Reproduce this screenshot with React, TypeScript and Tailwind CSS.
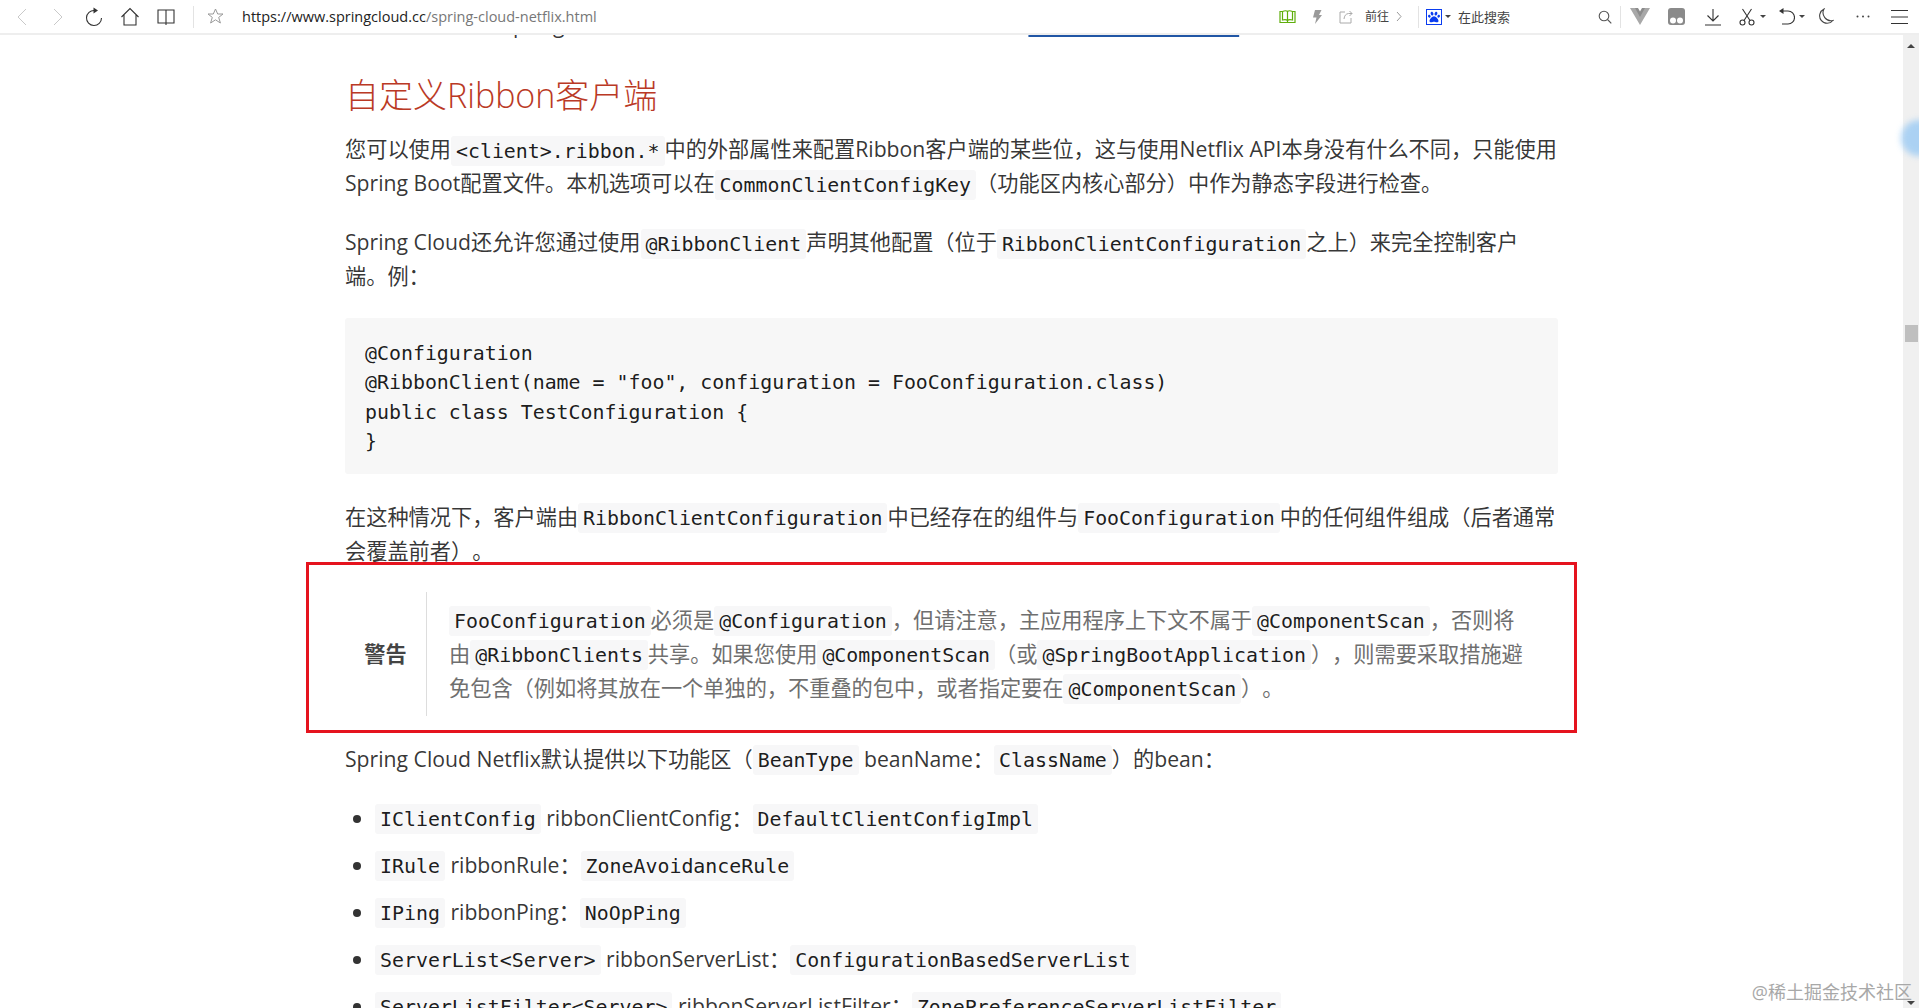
import { FaPaw } from 'react-icons/fa'
import type { ReactNode } from 'react'

const bodyFont = "font-['Open_Sans','Noto_Sans_CJK_SC',sans-serif]"

function Code({ children }: { children: ReactNode }) {
  return (
    <code className="rounded-[3px] bg-[#f7f7f8] px-[5px] py-[3.5px] font-['DejaVu_Sans_Mono','Noto_Sans_CJK_SC',monospace] text-[19.9px] leading-none text-[rgba(0,0,0,0.9)]">
      {children}
    </code>
  )
}

function Caret() {
  return <span className="h-0 w-0 border-x-[3px] border-t-[3px] border-x-transparent border-t-[#444]" />
}

function Slot({ w, children }: { w: string; children: ReactNode }) {
  return <span className={`flex shrink-0 items-center justify-center ${w}`}>{children}</span>
}

function Toolbar() {
  return (
    <header className="relative z-10 flex h-[35px] shrink-0 items-center border-b-2 border-[#eeeeee] bg-white pl-[4px]">
      <Slot w="w-9">
        <svg width="12" height="18" viewBox="0 0 12 18" fill="none" stroke="#c9c9c9" strokeWidth="1">
          <path d="M10 1 2 9l8 8" />
        </svg>
      </Slot>
      <Slot w="w-9">
        <svg width="12" height="18" viewBox="0 0 12 18" fill="none" stroke="#c9c9c9" strokeWidth="1">
          <path d="m2 1 8 8-8 8" />
        </svg>
      </Slot>
      <Slot w="w-9">
        <svg width="18" height="20" viewBox="0 0 18 20" fill="none" stroke="#333" strokeWidth="1.1">
          <path d="M9.500 3.500A7.500 7.500 0 1 0 16.500 11" />
          <path d="M8.500.5v6L13 3.500z" fill="#333" stroke="none" />
        </svg>
      </Slot>
      <Slot w="w-9">
        <svg width="20" height="20" viewBox="0 0 20 20" fill="none" stroke="#333" strokeWidth="1.1">
          <path d="M1.5 10 10 1.5 18.5 10M4 8v10h12V8" />
        </svg>
      </Slot>
      <Slot w="w-9">
        <svg width="18" height="18" viewBox="0 0 18 18" fill="none" stroke="#333" strokeWidth="1.1">
          <path d="M1 2h16v13H1zM9 2v15" />
        </svg>
      </Slot>
      <span className="ml-[9px] h-[22px] w-px bg-[#e3e3e3]" />
      <Slot w="ml-[11px] w-[20px]">
        <svg width="17" height="17" viewBox="0 0 17 17" fill="none" stroke="#999" strokeWidth="1">
          <path d="m8.5 1 2.2 5h5.3l-4.3 3.4 1.7 5.6-4.9-3.2L3.6 15l1.7-5.6L1 6h5.3z" />
        </svg>
      </Slot>
      <span className={`ml-[17px] pt-px ${bodyFont} text-[14.5px]`}>
        <span className="text-[#222]">https://www.springcloud.cc</span>
        <span className="text-[#777]">/spring-cloud-netflix.html</span>
      </span>

      <div className="absolute left-[1272px] top-0 flex h-[33px] items-center">
        <Slot w="w-[30px]">
          <svg width="17" height="15" viewBox="0 0 17 15" fill="none" stroke="#5fae0a" strokeWidth="1.2">
            <path d="M1 2.5h2.5q3.5-1.5 5 0 1.5-1.5 5 0H16v11H1zM3.5 2.5v8.5q3.500-1 5 .5 1.500-1.500 5-.5V2.500M8.500 2.500v11" />
          </svg>
        </Slot>
        <Slot w="w-[30px]">
          <svg width="10" height="14" viewBox="0 0 10 14" fill="#9a9a9a">
            <path d="M3 0h6.500L7 5h3l-7 9 1.500-6.500H1z" />
          </svg>
        </Slot>
        <Slot w="w-[28px]">
          <svg width="14" height="14" viewBox="0 0 14 14" fill="none" stroke="#aaa" strokeWidth="1">
            <path d="M6 2H1v11h11V8M5 9q.5-5 4.500-5.500H13M10.500 1 13 3.500 10.500 6" />
          </svg>
        </Slot>
        <span className={`ml-[5px] ${bodyFont} text-[12px] text-[#444]`}>前往</span>
        <Slot w="ml-[4px] w-[12px]">
          <svg width="6" height="11" viewBox="0 0 6 11" fill="none" stroke="#999" strokeWidth="1">
            <path d="m1 1 4 4.500L1 10" />
          </svg>
        </Slot>
        <span className="ml-[13px] h-[22px] w-px bg-[#e3e3e3]" />
        <span className="ml-[7px] flex h-[16px] w-[16px] items-center justify-center border border-[#0a3cf0] bg-white">
          <FaPaw className="text-[12px] text-[#0a3cf0]" />
        </span>
        <Slot w="ml-[1px] w-[10px]">
          <Caret />
        </Slot>
        <span className={`ml-[5px] ${bodyFont} text-[13px] text-[#444]`}>在此搜索</span>
        <Slot w="ml-[85px] w-[20px]">
          <svg width="14" height="14" viewBox="0 0 14 14" fill="none" stroke="#555" strokeWidth="1.1">
            <circle cx="6" cy="6" r="4.800" />
            <path d="m9.500 9.500 3.800 3.800" />
          </svg>
        </Slot>
        <span className="ml-[5px] h-[22px] w-px bg-[#e3e3e3]" />
        <Slot w="ml-px w-[36px]">
          <svg width="20" height="17" viewBox="0 0 20 17">
            <path d="M0 0h7l3 5 3-5h7l-10 17z" fill="#a8a8a8" />
            <path d="M5 0h3l2 3.500L12 0h3l-5 9z" fill="#8c8c8c" />
          </svg>
        </Slot>
        <Slot w="w-[36px]">
          <svg width="17" height="17" viewBox="0 0 17 17">
            <rect width="17" height="17" rx="3" fill="#8a8a8a" />
            <circle cx="5" cy="12.500" r="3" fill="#fff" />
            <circle cx="12" cy="12.500" r="3" fill="#fff" />
          </svg>
        </Slot>
        <Slot w="ml-px w-[36px]">
          <svg width="18" height="18" viewBox="0 0 18 18" fill="none" stroke="#333" strokeWidth="1.1">
            <path d="M9 1v12M3.500 7.500 9 13l5.500-5.500M1 17h16" />
          </svg>
        </Slot>
        <Slot w="ml-[4px] w-[24px]">
          <svg width="16" height="18" viewBox="0 0 16 18" fill="none" stroke="#333" strokeWidth="1.1">
            <circle cx="3.500" cy="14.500" r="2.500" />
            <circle cx="12.500" cy="14.500" r="2.500" />
            <path d="M5 12.500 12.500 1M11 12.500 3.500 1" />
          </svg>
        </Slot>
        <Slot w="w-[8px]">
          <Caret />
        </Slot>
        <Slot w="ml-[7px] w-[24px]">
          <svg width="17" height="17" viewBox="0 0 17 17" fill="none" stroke="#333" strokeWidth="1.1">
            <path d="M5 3h5a6 6 0 0 1 0 13H4" />
            <path d="M5.500 0v6L1 3z" fill="#333" stroke="none" />
          </svg>
        </Slot>
        <Slot w="w-[8px]">
          <Caret />
        </Slot>
        <Slot w="ml-[8px] w-[24px]">
          <svg width="16" height="17" viewBox="0 0 16 17" fill="none" stroke="#444" strokeWidth="1.1">
            <path d="M6 1A7.500 7.500 0 1 0 15 12.500 8 8 0 0 1 6 1z" />
          </svg>
        </Slot>
        <Slot w="ml-[13px] w-[24px]">
          <svg width="14" height="3" viewBox="0 0 14 3" fill="#444">
            <circle cx="1.500" cy="1.500" r="1" />
            <circle cx="7" cy="1.500" r="1" />
            <circle cx="12.500" cy="1.500" r="1" />
          </svg>
        </Slot>
        <Slot w="ml-[12px] w-[24px]">
          <svg width="17" height="14" viewBox="0 0 17 14" fill="none" stroke="#333" strokeWidth="1">
            <path d="M0 .5h17M0 7h17M0 13.500h17" />
          </svg>
        </Slot>
      </div>
    </header>
  )
}

function Scrollbar() {
  return (
    <aside className="flex w-[16px] shrink-0 flex-col items-center bg-[#f0f0f0] pt-[9px]">
      <span className="h-0 w-0 border-x-[4px] border-b-[4px] border-x-transparent border-b-[#444]" />
      <span className="ml-[1px] mt-[277px] h-[17px] w-[13px] bg-[#bfbfbf]" />
      <span className="mt-auto mb-[3px] h-0 w-0 border-x-[4px] border-t-[4px] border-x-transparent border-t-[#444]" />
    </aside>
  )
}

export default function App() {
  return (
    <div className={`relative flex h-screen flex-col overflow-hidden bg-white ${bodyFont} text-[21.2px] leading-[34px] text-[rgba(0,0,0,0.8)] [text-spacing-trim:space-all]`}>
      <Toolbar />
      <div className="flex min-h-0 flex-1">
        <main className="min-w-0 flex-1 overflow-hidden">
          <div className="ml-[345px] w-[1213px]">
            {/* prior section, scrolled almost out of view */}
            <p className="-mt-[27px] whitespace-nowrap">
              <span className="invisible">有关使用当前的</span>
              <span className="ml-[8px]">Spring</span>
              <span className="ml-[464px] text-transparent underline decoration-[#2156a5] [text-decoration-skip-ink:none]">Spring Cloud项目页面</span>
            </p>

            <h3 className="mt-[29px] text-[34px] font-light leading-[48px] text-[#ba3925]">自定义Ribbon客户端</h3>

            <p className="mt-[13px] whitespace-nowrap">
              您可以使用<Code>&lt;client&gt;.ribbon.*</Code>中的外部属性来配置Ribbon客户端的某些位，这与使用Netflix API本身没有什么不同，只能使用
              <br />
              Spring Boot配置文件。本机选项可以在<Code>CommonClientConfigKey</Code>（功能区内核心部分）中作为静态字段进行检查。
            </p>

            <p className="mt-[25px] whitespace-nowrap">
              Spring Cloud还允许您通过使用<Code>@RibbonClient</Code>声明其他配置（位于<Code>RibbonClientConfiguration</Code>之上）来完全控制客户
              <br />
              端。例：
            </p>

            <pre className="mt-[25px] rounded-[3px] bg-[#f7f7f7] px-[20px] pb-[17px] pt-[21px] font-['DejaVu_Sans_Mono',monospace] text-[19.9px] leading-[29.4px] text-[rgba(0,0,0,0.9)]">
              {`@Configuration
@RibbonClient(name = "foo", configuration = FooConfiguration.class)
public class TestConfiguration {
}`}
            </pre>

            <p className="mt-[26px] whitespace-nowrap">
              在这种情况下，客户端由<Code>RibbonClientConfiguration</Code>中已经存在的组件与<Code>FooConfiguration</Code>中的任何组件组成（后者通常
              <br />
              会覆盖前者）。
            </p>

            {/* alert, with the red frame drawn on the screenshot */}
            <div className="-ml-[39px] -mr-[19px] mt-[-6px] flex h-[171px] items-center border-[3px] border-[#e5131e] pb-[14px] pl-[36px] pr-[16px] pt-[27px]">
              <div className="w-[81px] text-center font-bold text-[#444]">警告</div>
              <div className="flex h-[124px] items-center whitespace-nowrap border-l border-[#dddddd] pl-[22px] text-[#6f6f6f]">
                <div>
                  <Code>FooConfiguration</Code>必须是<Code>@Configuration</Code>，但请注意，主应用程序上下文不属于<Code>@ComponentScan</Code>，否则将
                  <br />
                  由<Code>@RibbonClients</Code>共享。如果您使用<Code>@ComponentScan</Code>（或<Code>@SpringBootApplication</Code>），则需要采取措施避
                  <br />
                  免包含（例如将其放在一个单独的，不重叠的包中，或者指定要在<Code>@ComponentScan</Code>）。
                </div>
              </div>
            </div>

            <p className="mt-[9px] whitespace-nowrap">
              Spring Cloud Netflix默认提供以下功能区（<Code>BeanType</Code> beanName：<Code>ClassName</Code>）的bean：
            </p>

            <ul className="mt-[25px] list-disc whitespace-nowrap pl-[30px]">
              <li className="mb-[13px]">
                <Code>IClientConfig</Code> ribbonClientConfig：<Code>DefaultClientConfigImpl</Code>
              </li>
              <li className="mb-[13px]">
                <Code>IRule</Code> ribbonRule：<Code>ZoneAvoidanceRule</Code>
              </li>
              <li className="mb-[13px]">
                <Code>IPing</Code> ribbonPing：<Code>NoOpPing</Code>
              </li>
              <li className="mb-[13px]">
                <Code>ServerList&lt;Server&gt;</Code> ribbonServerList：<Code>ConfigurationBasedServerList</Code>
              </li>
              <li>
                <Code>ServerListFilter&lt;Server&gt;</Code> ribbonServerListFilter：<Code>ZonePreferenceServerListFilter</Code>
              </li>
            </ul>
          </div>
        </main>
        <Scrollbar />
      </div>

      {/* floating helper ball at the window edge */}
      <span className="absolute -right-[18px] top-[120px] h-[36px] w-[36px] rounded-full bg-[#8ec5f5] opacity-70 blur-[3px]" />
      <span className="absolute bottom-[5px] right-[7px] text-[18px] leading-[22px] text-[#a8a8a8]">@稀土掘金技术社区</span>
    </div>
  )
}
